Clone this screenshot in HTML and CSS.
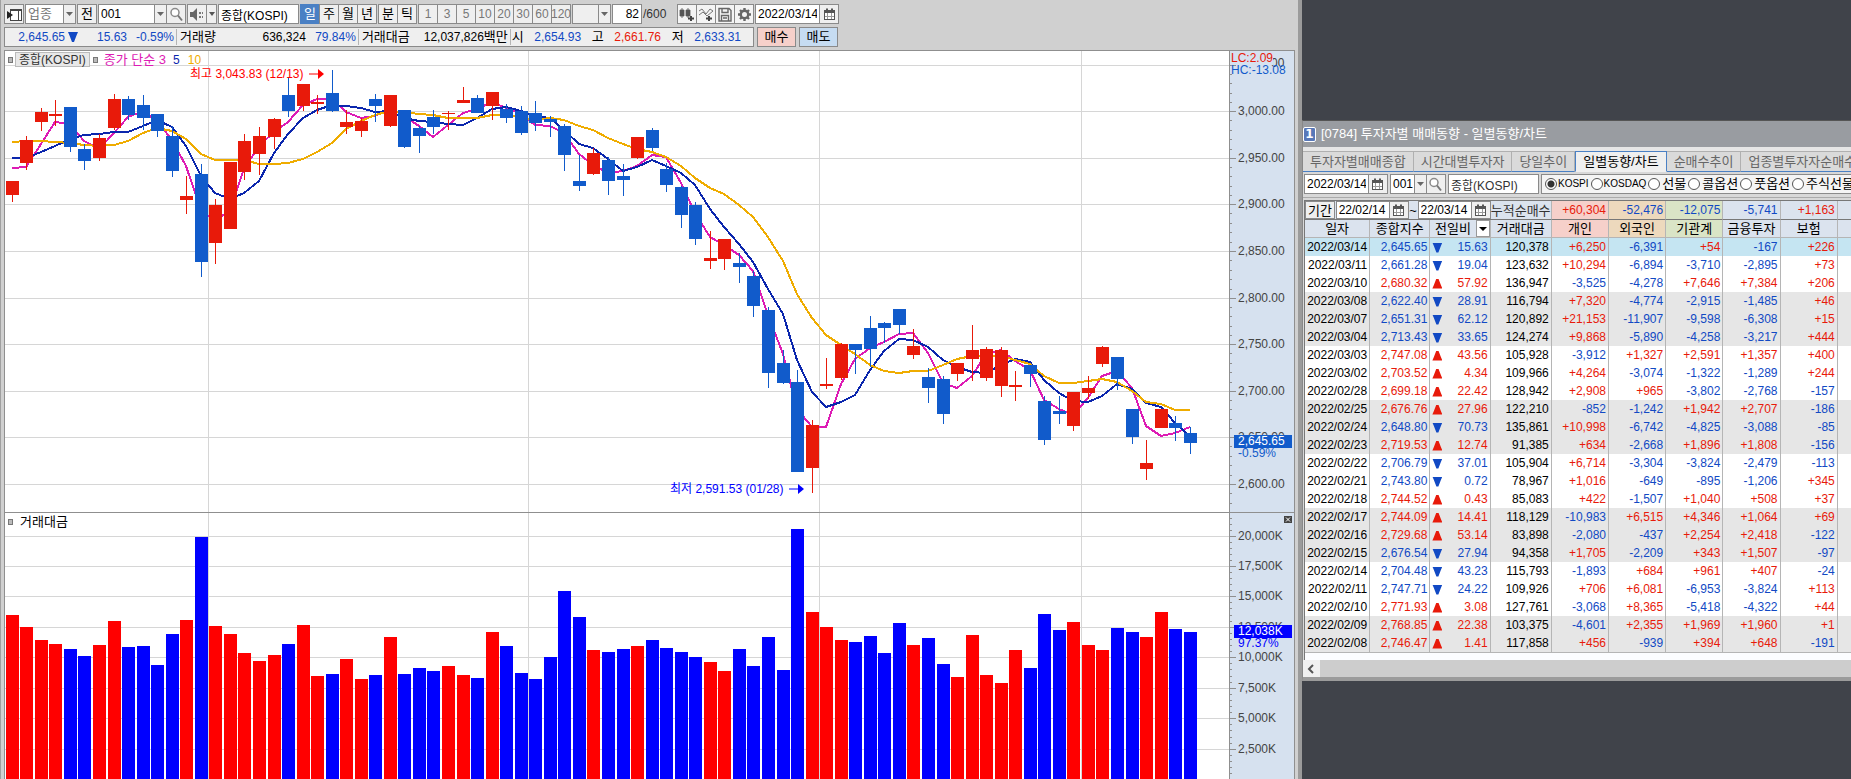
FILE: index.html
```html
<!DOCTYPE html>
<html lang="ko">
<head>
<meta charset="utf-8">
<title>종합(KOSPI) 차트</title>
<link rel="stylesheet" href="styles.css">
</head>
<body>
<svg class="defs" aria-hidden="true">
  <symbol id="i-panel" viewBox="0 0 17 17"><rect x="4.500" y="3.500" width="11" height="11" fill="#fff" stroke="#444"/><path d="M4 4.500h12M12.500 5v9" stroke="#444" fill="none"/><path d="M1 5l6 4-6 4z" fill="#222"/></symbol>
  <symbol id="i-search" viewBox="0 0 17 17"><circle cx="7" cy="6.500" r="4" fill="#fff" stroke="#8a8a8a" stroke-width="1.500"/><path d="M10 9.500l4 5" stroke="#777" stroke-width="2"/></symbol>
  <symbol id="i-sound" viewBox="0 0 17 17"><path d="M1 6h3l4-4v13l-4-4H1z" fill="#666"/><path d="M10 6h2v2h-2zM10 10h2v2h-2zM13 6h1v2h-1zM13 10h1v2h-1z" fill="#777"/></symbol>
  <symbol id="i-candle" viewBox="0 0 17 17"><path d="M1 4h4v6H1zM3 2v10M7 4h4v6H7zM9 2v10" fill="#555" stroke="#555" stroke-width=".8"/><path d="M9 12.500h6M12 10v5" stroke="#444" stroke-width="2"/></symbol>
  <symbol id="i-wave" viewBox="0 0 17 17"><path d="M1 5l3-2 4 5 4-5 3 2M1 9l4-3 4 4 6-5" fill="none" stroke="#777"/><path d="M8 12.500h6M11 10v5" stroke="#444" stroke-width="2"/></symbol>
  <symbol id="i-save" viewBox="0 0 17 17"><path d="M2 2.500h10l2 2V15H2zM5 2.500v4h6v-4M4.500 15V9.500h7V15M6 12h4" fill="none" stroke="#666" stroke-width="1.400"/></symbol>
  <symbol id="i-gear" viewBox="0 0 17 17"><circle cx="8.500" cy="8.500" r="3.700" fill="none" stroke="#666" stroke-width="2.400"/><path d="M8.500 2v2M8.500 13v2M2 8.500h2M13 8.500h2M4 4l1.500 1.500M11.500 11.500l1.500 1.500M13 4l-1.500 1.500M4 13l1.500-1.500" stroke="#666" stroke-width="2.400"/></symbol>
  <symbol id="i-cal" viewBox="0 0 17 17"><rect x="3.500" y="4.500" width="10" height="9" fill="#fff" stroke="#555"/><path d="M3 4h11v3H3zM5 2.500h2v2H5zM10 2.500h2v2h-2z" fill="#555"/><path d="M6.500 7v6M10.500 7v6M4 10.500h9" stroke="#999"/></symbol>
</svg>

<main class="chart-window">
  <div class="toolbar">
    <button class="btn sq" aria-label="패널"><svg class="icon"><use href="#i-panel"/></svg></button>
    <select class="field combo w-kind" aria-label="구분"><option>업종</option></select>
    <button class="btn sq">전</button>
    <div class="joined">
      <select class="field combo w-code num" aria-label="종목코드"><option>001</option></select>
      <button class="btn sq" aria-label="검색"><svg class="icon"><use href="#i-search"/></svg></button>
    </div>
    <div class="joined">
      <button class="btn sq" aria-label="소리"><svg class="icon"><use href="#i-sound"/></svg></button>
      <button class="btn slim" aria-label="소리 설정"><i class="caret"></i></button>
    </div>
    <input class="field w-name num" value="종합(KOSPI)" aria-label="종목명">
    <div class="joined"><button class="btn sq active">일</button><button class="btn sq">주</button><button class="btn sq">월</button><button class="btn sq">년</button></div>
    <div class="joined"><button class="btn sq">분</button><button class="btn sq">틱</button></div>
    <div class="joined num dim"><button class="btn sq">1</button><button class="btn sq">3</button><button class="btn sq">5</button><button class="btn sq">10</button><button class="btn sq">20</button><button class="btn sq">30</button><button class="btn sq">60</button><button class="btn sq">120</button></div>
    <select class="field combo w-blank" aria-label="분 간격" disabled><option></option></select>
    <input class="field w-count num" value="82" aria-label="표시 개수"><span class="total num">/600</span>
    <div class="joined tools">
      <button class="btn sq" aria-label="종목 추가"><svg class="icon"><use href="#i-candle"/></svg></button>
      <button class="btn sq" aria-label="지표 추가"><svg class="icon"><use href="#i-wave"/></svg></button>
      <button class="btn sq" aria-label="저장"><svg class="icon"><use href="#i-save"/></svg></button>
      <button class="btn sq" aria-label="설정"><svg class="icon"><use href="#i-gear"/></svg></button>
    </div>
    <div class="joined"><input class="field w-date num" value="2022/03/14" aria-label="날짜"><button class="btn sq" aria-label="달력"><svg class="icon"><use href="#i-cal"/></svg></button></div>
  </div>

  <div class="quote-row">
    <div class="quote">
      <span class="down num q-price">2,645.65</span><i class="tri"></i>
      <span class="down num q-diff">15.63</span><span class="down num q-rate">-0.59%</span>
      <span class="q-label">거래량</span><span class="num q-vol">636,324</span><span class="down num q-vrate">79.84%</span>
      <span class="q-label">거래대금</span><span class="q-amt"><span class="num">12,037,826</span>백만</span>
      <span class="q-label tight">시</span><span class="down num q-ohl">2,654.93</span>
      <span>고</span><span class="up num q-ohl">2,661.76</span>
      <span>저</span><span class="down num q-ohl">2,633.31</span>
    </div>
    <button class="btn trade buy">매수</button>
    <button class="btn trade sell">매도</button>
  </div>

  <div class="chart">
    <section class="pane price">
      <svg class="plot" id="price-plot"></svg>
      <svg class="axis" id="price-axis"></svg>
      <div class="legend">
        <i class="mark"></i><button class="legend-name">종합(KOSPI)</button><i class="mark"></i>
        <span class="ma3">종가 단순 3</span><span class="ma5">5</span><span class="ma10">10</span>
      </div>
      <div class="note high">최고 3,043.83 (12/13)<svg class="arrow" viewBox="0 0 16 12"><path d="M0 6h9" stroke="currentColor"/><path d="M9 1l6 5-6 5z" fill="currentColor"/></svg></div>
      <div class="note low">최저 2,591.53 (01/28)<svg class="arrow" viewBox="0 0 16 12"><path d="M0 6h9" stroke="currentColor"/><path d="M9 1l6 5-6 5z" fill="currentColor"/></svg></div>
    </section>
    <section class="pane volume">
      <svg class="plot" id="volume-plot"></svg>
      <svg class="axis" id="volume-axis"></svg>
      <div class="legend"><i class="mark"></i><span class="legend-vol">거래대금</span></div>
      <button class="pane-close" aria-label="닫기"><svg viewBox="0 0 8 7"><path d="M2 1.500l4 4M6 1.500l-4 4" stroke="#fff"/></svg></button>
    </section>
  </div>
</main>

<aside class="desk">
  <section class="investor">
    <header class="title"><b>1</b><span>[0784] 투자자별 매매동향 - 일별동향/차트</span></header>
    <nav class="tabs">
      <button>투자자별매매종합</button><button>시간대별투자자</button><button>당일추이</button><button class="on">일별동향/차트</button><button>순매수추이</button><button>업종별투자자순매수</button>
    </nav>
    <div class="filters">
      <div class="joined"><input class="field w-date num" value="2022/03/14" aria-label="조회일"><button class="btn sq" aria-label="달력"><svg class="icon"><use href="#i-cal"/></svg></button></div>
      <div class="joined"><select class="field combo w-short num" aria-label="업종코드"><option>001</option></select><button class="btn sq" aria-label="검색"><svg class="icon"><use href="#i-search"/></svg></button></div>
      <input class="field w-index num" value="종합(KOSPI)" aria-label="업종명">
      <div class="radios">
        <label class="en"><input type="radio" name="mkt" checked>KOSPI</label>
        <label class="en"><input type="radio" name="mkt">KOSDAQ</label>
        <label><input type="radio" name="mkt">선물</label>
        <label><input type="radio" name="mkt">콜옵션</label>
        <label><input type="radio" name="mkt">풋옵션</label>
        <label><input type="radio" name="mkt">주식선물</label>
      </div>
    </div>
    <div class="grid">
      <table>
        <colgroup><col class="c-date"><col class="c-idx"><col class="c-idx"><col class="c-amt"><col class="c-inv"><col class="c-inv"><col class="c-inv"><col class="c-inv"><col class="c-inv"><col class="c-inv"></colgroup>
        <thead>
          <tr class="sum">
            <td colspan="3"><div class="period">
              <button class="btn term">기간</button>
              <div class="joined"><input class="field w-day num" value="22/02/14" aria-label="시작일"><button class="btn sq" aria-label="달력"><svg class="icon"><use href="#i-cal"/></svg></button></div>
              <span>~</span>
              <div class="joined"><input class="field w-day num" value="22/03/14" aria-label="종료일"><button class="btn sq" aria-label="달력"><svg class="icon"><use href="#i-cal"/></svg></button></div>
            </div></td>
            <th>누적순매수</th><td class="up pink">+60,304</td><td class="down sand">-52,476</td><td class="down leaf">-12,075</td><td class="down">-5,741</td><td class="up">+1,163</td><td></td>
          </tr>
          <tr class="head"><th>일자</th><th>종합지수</th><th class="sort">전일비<button aria-label="전일비 선택"><i class="caret dark"></i></button></th><th>거래대금</th><th class="pink">개인</th><th class="sand">외국인</th><th class="leaf">기관계</th><th>금융투자</th><th>보험</th><th></th></tr>
        </thead>
        <tbody id="rows"></tbody>
      </table>
    </div>
    <div class="scroll"><button aria-label="왼쪽으로"><svg viewBox="0 0 8 10"><path d="M6 1L2 5l4 4" fill="none" stroke="#555" stroke-width="2"/></svg></button></div>
  </section>
</aside>
<script src="app.js"></script>
</body>
</html>
```

FILE: styles.css
```css
* { box-sizing: border-box; }
body {
  margin: 0; display: flex; height: 100vh; overflow: hidden; background: #40434a; color: #000;
  font: 13px/16px "Liberation Sans", "Noto Sans CJK KR", sans-serif;
}
button, input, select { font: inherit; color: inherit; margin: 0; border-radius: 0; }
.defs { display: none; }
.num { font-size: 12px; }
.up { color: #e81a0a; }
.down { color: #1149c4; }
.joined { display: flex; }
.icon { width: 17px; height: 17px; display: block; flex: none; }

.btn { height: 20px; padding: 0; border: 1px solid #8a8a8a; background: #efefef; display: flex; align-items: center; justify-content: center; white-space: nowrap; }
.sq { width: 20px; }
.slim { width: 11px; }
.joined > * + * { margin-left: -1px; }
.field { height: 20px; padding: 0 2px; border: 1px solid #8a8a8a; background: #fff; outline: 0; }
.combo {
  appearance: none; opacity: 1;
  background: url("data:image/svg+xml,%3Csvg xmlns='http://www.w3.org/2000/svg' width='12' height='18'%3E%3Cpath d='M0 0h12v18H0z' fill='%23efefef'/%3E%3Cpath d='M.5 0v18' stroke='%238a8a8a'/%3E%3Cpath d='M3 7h7l-3.500 4z' fill='%23666'/%3E%3C/svg%3E") right center no-repeat #fff;
}
.caret { border: 3px solid transparent; border-top: 4px solid #555; border-bottom: 0; }
.caret.dark { border-width: 4px 4px 0; border-top-color: #000; }
.tri { width: 10px; height: 10px; display: inline-block; background: #1149c4; clip-path: polygon(0 0, 100% 0, 85% 35%, 60% 100%, 40% 100%, 15% 35%); }
.tri.ri { background: #e81a0a; clip-path: polygon(40% 0, 60% 0, 85% 65%, 100% 100%, 0 100%, 15% 65%); }

.chart-window { flex: 0 0 70.34%; min-width: 0; display: flex; flex-direction: column; background: #d0d0d0; border-left: 1px solid #a0a0a0; border-right: 4px solid #9b9b9b; }
.toolbar { display: flex; gap: 1px; padding: 4px 0 3px 3px; }
.toolbar > * { flex: none; }
.w-kind { width: 51px; color: #777; }
.w-code { width: 69px; }
.w-name { width: 81px; }
.w-blank { width: 39px; background-color: #efefef; }
.w-count { width: 30px; text-align: right; }
.w-date { width: 65px; }
.total { align-self: center; width: 33px; color: #333; }
.tools .btn { background: #f4f4f4; }
.btn.active { background: #4a80c4; color: #fff; border-color: #4a80c4; }
.dim { color: #777; }

.quote-row { display: flex; gap: 3px; padding: 0 0 3px 3px; }
.quote { display: flex; align-items: center; width: 750px; height: 20px; border: 1px solid #8a8a8a; background: #efefef; white-space: nowrap; }
.quote > * { flex: none; }
.q-price { width: 63px; text-align: right; padding-right: 3px; }
.q-diff { width: 49px; text-align: right; }
.q-rate { width: 47px; text-align: right; }
.q-label { border-left: 1px solid #b5b5b5; margin-left: 2px; padding-left: 3px; }
.q-label.tight { padding-left: 1px; }
.q-vol { width: 90px; text-align: right; }
.q-vrate { width: 50px; text-align: right; }
.q-amt { width: 98px; text-align: right; }
.q-ohl { width: 68px; text-align: center; }
.trade { width: 39px; }
.buy { background: #f6d0ca; }
.sell { background: #c6dcf2; }

.chart { flex: 1; min-height: 0; margin-left: 3px; margin-right: 3px; display: flex; flex-direction: column; background: #fff; border-left: 1px solid #8f8f8f; border-right: 1px solid #8f8f8f; }
.pane { position: relative; display: flex; box-shadow: inset 0 1px #8f8f8f; overflow: hidden; }
.price { flex: 0 0 462px; }
.volume { flex: 1; min-height: 0; }
.plot { flex: 1; min-width: 0; height: 100%; shape-rendering: crispEdges; }
.axis { width: 65px; height: 100%; background: #d6e1ef; border-left: 1px solid #8f8f8f; border-top: 1px solid #8f8f8f; font-size: 12px; shape-rendering: crispEdges; }
.legend { position: absolute; left: 3px; top: 2px; display: flex; align-items: center; height: 15px; font-size: 12px; line-height: 14px; }
.mark { width: 5px; height: 6px; border: 1px solid #777; background: #bbb; }
.legend-name { height: 15px; margin: 0 3px 0 2px; padding: 0 3px; border: 1px solid #bbb; background: #e8e8e8; color: #333; }
.legend-vol { font-size: 13px; margin-left: 7px; }
.ma3 { color: #dd1bb4; margin-left: 6px; font-size: 13px; }
.ma5 { color: #0b26ad; margin-left: 7px; }
.ma10 { color: #efac00; margin-left: 8px; }
.note { position: absolute; display: flex; align-items: center; gap: 6px; font-size: 12px; white-space: nowrap; }
.arrow { width: 16px; height: 12px; }
.high { left: 185px; top: 16px; color: #f00; }
.low { left: 665px; top: 431px; color: #00f; }
.pane-close { position: absolute; right: 2px; top: 4px; width: 8px; height: 7px; padding: 0; border: 0; background: #444; }
.pane-close svg { display: block; width: 8px; height: 7px; }

.desk { flex: 1; min-width: 0; padding-top: 120px; }
.investor { background: #d8d8d8; border-top: 1px solid #555; border-left: 1px solid #888; border-bottom: 4px solid #9b9b9b; overflow: hidden; }
.title { display: flex; align-items: center; gap: 5px; height: 26px; background: #999ca1; color: #fff; white-space: nowrap; }
.title b { width: 13px; height: 15px; border: 1px solid #fff; border-radius: 2px; background: #5878b8; font: bold 12px/13px "DejaVu Sans", sans-serif; text-align: center; }
.tabs { display: flex; padding-top: 4px; background: #e6e6e6; box-shadow: inset 0 -1px #4a80c4; }
.tabs button { flex: none; height: 21px; padding: 0 7px; border: 1px solid #b0b0b0; border-width: 1px 1px 0 0; border-bottom: 1px solid #4a80c4; background: #dadada; color: #666; }
.tabs .on { background: #efefef; color: #000; border: 1px solid #4a80c4; border-bottom-color: #efefef; }
.filters { display: flex; gap: 2px; padding: 2px 0 3px 1px; border-bottom: 1px solid #aaa; }
.filters > * { flex: none; }
.w-short { width: 37px; }
.w-index { width: 91px; color: #333; }
.radios { display: flex; align-items: center; gap: 2px; height: 20px; width: 400px; padding-left: 3px; border: 1px solid #8a8a8a; background: #f4f4f4; white-space: nowrap; }
.radios label { display: flex; align-items: center; gap: 2px; }
.radios .en { font-size: 10px; gap: 1px; }
.radios input { appearance: none; width: 12px; height: 12px; border: 1px solid #555; border-radius: 50%; background: #fff; }
.radios input:checked { background: radial-gradient(circle, #333 0 3px, #fff 4px); }

.grid { margin: 2px 0 0 1px; border-left: 1px solid #777; border-top: 1px solid #777; background: #fcfdff; padding-bottom: 7px; overflow: hidden; }
table { table-layout: fixed; width: 590px; border-collapse: separate; border-spacing: 0; border-bottom: 1px solid #b5b5b5; }
.c-date { width: 65px; }
.c-idx { width: 60px; }
.c-amt { width: 61px; }
.c-inv { width: 57px; }
td, th { height: 18px; padding: 0 2px; line-height: 17px; text-align: right; font-weight: normal; border-right: 1px solid #b5b5b5; white-space: nowrap; }
td { font-size: 12px; }
tbody td { background: #fff; }
.sum td, .sum th { height: 19px; background: #dbe3ee; border-bottom: 1px solid #777; }
.sum th { padding: 0; color: #333; text-align: center; font-size: 13px; }
.sum td[colspan] { padding: 0; font-size: 13px; border-right: 0; }
.head th { padding: 0; background: #dbe3ee; text-align: center; border-bottom: 1px solid #b5b5b5; }
.head .pink, .sum .pink { background: #f6d0ca; }
.head .sand, .sum .sand { background: #edd9bd; }
.head .leaf, .sum .leaf { background: #dae4c6; }
.period { display: flex; align-items: center; justify-content: space-between; height: 18px; }
.period .btn, .period .field { height: 18px; }
.term { width: 30px; }
.w-day { width: 54px; }
.head .sort { position: relative; padding-right: 14px; }
.sort button { position: absolute; right: 0; top: 0; width: 14px; height: 17px; padding: 0; border: 1px solid #999; background: #fff; display: flex; align-items: center; justify-content: center; }
.grey td { background: #e6e6e6; }
.now td { background: #c5e5f2; }
td .tri { float: left; margin-top: 4px; }
.scroll { height: 17px; background: #cdcdcd; }
.scroll button { width: 17px; height: 17px; padding: 3px 4px; border: 0; background: #f0f0f0; display: block; }
.scroll svg { width: 8px; height: 10px; display: block; }
```

FILE: app.js
```js
// Each candle: direction, high, body top, body bottom, low, volume top (scale units, 3 per pixel)
const candles = `R 393 393 435 456 345|R 258 270 339 360 381|R 174 186 216 243 420|R 150 192 198 228 432|B 171 171 291 306 447
B 282 297 333 360 468|R 252 264 324 333 435|R 132 147 234 240 363|B 138 147 195 210 441|B 135 165 204 240 438
B 192 192 243 261 495|B 228 258 363 381 402|R 378 438 450 492 360|B 342 372 636 681 111|R 447 465 579 642 378
R 336 336 537 537 402|R 252 273 366 390 459|R 231 258 312 375 483|R 204 207 261 297 465|B 84 135 183 201 432
R 102 102 168 183 375|R 135 156 162 192 528|B 60 129 183 186 522|R 180 216 231 252 477|R 204 213 243 261 537
B 132 147 168 216 525|R 135 135 228 231 411|B 180 180 291 294 522|B 228 234 258 309 504|B 180 201 231 252 513
R 183 189 192 240 498|R 111 150 159 159 525|B 135 144 189 189 534|R 126 126 168 210 396|B 162 177 204 219 438
B 168 183 249 255 519|B 153 189 219 243 537|B 198 207 216 261 471|B 222 228 315 363 273|B 315 393 408 423 351
R 294 309 372 375 450|B 321 330 393 435 456|B 342 378 390 438 447|R 261 261 324 327 438|B 234 240 294 303 420
B 339 357 405 426 444|B 408 411 495 534 456|B 456 465 567 585 471|R 543 624 633 657 486|R 567 567 627 660 513
B 609 639 651 699 447|B 663 678 768 801 498|B 771 780 969 1014 411|B 900 939 999 1002 510|B 960 996 1266 1266 87
R 1110 1125 1254 1329 336|R 924 1002 1008 1017 381|R 879 882 984 990 420|B 882 882 900 972 426|B 798 834 897 951 408
B 816 819 834 879 459|B 777 777 825 852 369|R 837 888 915 927 435|B 954 981 1014 1059 414|B 978 987 1092 1122 492
R 939 939 972 993 531|R 825 900 927 993 405|R 891 897 984 993 525|R 891 900 1008 1041 549|R 963 1005 1011 1053 450
B 945 945 972 1011 504|B 1038 1053 1170 1185 342|B 1038 1083 1092 1122 390|R 1026 1026 1128 1143 366|R 978 1014 1029 1047 435
R 888 891 942 951 450|B 921 921 987 1020 384|B 1077 1077 1161 1182 396|R 1170 1239 1257 1290 411|R 1077 1077 1134 1134 336
B 1098 1119 1134 1173 387|B 1131 1149 1179 1212 396`.split(/[|\n]/).map(s => {
  const p = s.split(' ');
  return [p[0], ...p.slice(1).map(Number)];
});

const cx = i => Math.floor(7.25 + i * 14.543);
const rect = (x, y, w, h, f) => `<rect x="${x}" y="${y}" width="${w}" height="${h}" fill="${f}"/>`;
const hline = y => `<rect x="0" y="${y}" width="100%" height="1" fill="#d6d6d6"/>`;
const months = [203, 523, 814, 1076].map(x => `<rect x="${x}" y="1" width="1" height="100%" fill="#d6d6d6"/>`).join('');
const closes = candles.map(c => c[0] === 'R' ? c[2] : c[3]);

function average(n, lead, color) {
  const pts = closes.map((_, i) => {
    const v = i < lead.length ? lead[i] : closes.slice(i - n + 1, i + 1).reduce((a, b) => a + b) / n;
    return cx(i) + ',' + Math.round(v / 3);
  });
  return `<polyline points="${pts.join(' ')}" fill="none" stroke="${color}" stroke-width="2"/>`;
}

const priceGrid = [15, 61, 108, 154, 201, 248, 294, 341, 387, 434];
const volumeGrid = [24, 54, 84, 115, 145, 176, 206, 237];

document.getElementById('price-plot').innerHTML =
  priceGrid.map(hline).join('') + months +
  average(3, [354, 351], '#dd1bb4') +
  average(5, [324, 324, 306, 288], '#0b26ad') +
  average(10, [276, 273, 272, 275, 279, 285, 288, 285, 273], '#efac00') +
  candles.map(([d, hi, top, bot, lo], i) => {
    const f = d === 'R' ? '#e81a0a' : '#115bcb';
    return rect(cx(i), hi / 3, 1, (lo - hi) / 3, f) + rect(cx(i) - 6, top / 3, 13, (bot - top) / 3, f);
  }).join('');

document.getElementById('volume-plot').innerHTML =
  volumeGrid.map(hline).join('') + months +
  candles.map((c, i) => rect(cx(i) - 6, c[5] / 3 - 12, 13, 2000, c[0] === 'R' ? '#f00' : '#00f')).join('');

const label = (y, t, f = '#444', x = 8) => `<text x="${x}" y="${y + 4}" fill="${f}">${t}</text>`;
const tick = (y, w) => rect(0, y, w, 1, '#8f8f8f');

function axis(grid, labels, parts, end) {
  let s = '';
  grid.forEach((y, i) => {
    s += tick(y - 1, 6) + label(y - 1, labels[i]);
    const next = grid[i + 1] || end;
    for (let k = 1; k < parts; k++) s += tick(Math.round(y - 1 + (next - y) * k / parts), 2);
  });
  return s;
}

document.getElementById('price-axis').innerHTML =
  axis(priceGrid, ['', '3,000.00', '2,950.00', '2,900.00', '2,850.00', '2,800.00', '2,750.00', '2,700.00', '2,650.00', '2,600.00'], 5, 481) +
  label(12, '00', '#444', 41) +
  rect(0, 1, 43, 13, '#d6e1ef') +
  label(7, 'LC:2.09', '#e81a0a', 1) + label(19, 'HC:-13.08', '#115bcb', 1) +
  rect(4, 384, 58, 13, '#115bcb') + label(390, '2,645.65', '#fff') + label(402, '-0.59%', '#115bcb');

document.getElementById('volume-axis').innerHTML =
  axis(volumeGrid, ['20,000K', '17,500K', '15,000K', '12,500K', '10,000K', '7,500K', '5,000K', '2,500K'], 5, 267) +
  tick(5, 2) + tick(11, 2) + tick(17, 2) +
  rect(4, 112, 58, 13, '#00f') + label(118, '12,038K', '#fff') + label(130, '97.37%', '#00f');

const days = `2022/03/14 2,645.65 -15.63 120,378 +6,250 -6,391 +54 -167 +226
2022/03/11 2,661.28 -19.04 123,632 +10,294 -6,894 -3,710 -2,895 +73
2022/03/10 2,680.32 +57.92 136,947 -3,525 -4,278 +7,646 +7,384 +206
2022/03/08 2,622.40 -28.91 116,794 +7,320 -4,774 -2,915 -1,485 +46
2022/03/07 2,651.31 -62.12 120,892 +21,153 -11,907 -9,598 -6,308 +15
2022/03/04 2,713.43 -33.65 124,274 +9,868 -5,890 -4,258 -3,217 +444
2022/03/03 2,747.08 +43.56 105,928 -3,912 +1,327 +2,591 +1,357 +400
2022/03/02 2,703.52 +4.34 109,966 +4,264 -3,074 -1,322 -1,289 +244
2022/02/28 2,699.18 +22.42 128,942 +2,908 +965 -3,802 -2,768 -157
2022/02/25 2,676.76 +27.96 122,210 -852 -1,242 +1,942 +2,707 -186
2022/02/24 2,648.80 -70.73 135,861 +10,998 -6,742 -4,825 -3,088 -85
2022/02/23 2,719.53 +12.74 91,385 +634 -2,668 +1,896 +1,808 -156
2022/02/22 2,706.79 -37.01 105,904 +6,714 -3,304 -3,824 -2,479 -113
2022/02/21 2,743.80 -0.72 78,967 +1,016 -649 -895 -1,206 +345
2022/02/18 2,744.52 +0.43 85,083 +422 -1,507 +1,040 +508 +37
2022/02/17 2,744.09 +14.41 118,129 -10,983 +6,515 +4,346 +1,064 +69
2022/02/16 2,729.68 +53.14 83,898 -2,080 -437 +2,254 +2,418 -122
2022/02/15 2,676.54 -27.94 94,358 +1,705 -2,209 +343 +1,507 -97
2022/02/14 2,704.48 -43.23 115,793 -1,893 +684 +961 +407 -24
2022/02/11 2,747.71 -24.22 109,926 +706 +6,081 -6,953 -3,824 +113
2022/02/10 2,771.93 +3.08 127,761 -3,068 +8,365 -5,418 -4,322 +44
2022/02/09 2,768.85 +22.38 103,375 -4,601 +2,355 +1,969 +1,960 +1
2022/02/08 2,746.47 +1.41 117,858 +456 -939 +394 +648 -191`.split('\n');

document.getElementById('rows').innerHTML = days.map((line, i) => {
  const [date, index, diff, amount, ...flows] = line.split(' ');
  const tone = v => v[0] === '-' ? 'down' : 'up';
  const row = i === 0 ? 'now' : i % 6 > 2 ? 'grey' : '';
  return `<tr class="${row}"><td>${date}</td><td class="${tone(diff)}">${index}</td>` +
    `<td class="${tone(diff)}"><i class="tri ${diff[0] === '-' ? '' : 'ri'}"></i>${diff.slice(1)}</td><td>${amount}</td>` +
    flows.map(v => `<td class="${tone(v)}">${v}</td>`).join('') + '<td></td></tr>';
}).join('');
```
